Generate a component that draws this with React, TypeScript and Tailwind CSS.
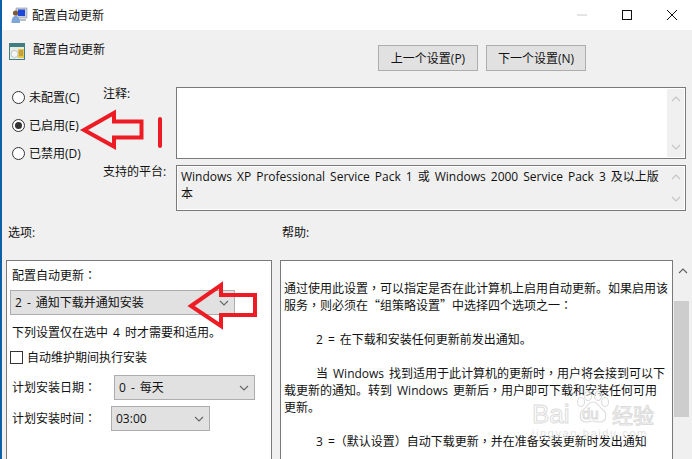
import React from "react";

const Radio = ({ label, checked }: { label: string; checked?: boolean }) => (
  <div className="flex h-[28px] items-center">
    <span className="flex h-[13px] w-[13px] items-center justify-center rounded-full border border-[#333] bg-white">
      {checked && <span className="h-[7px] w-[7px] rounded-full bg-[#333]" />}
    </span>
    <span className="ml-[4px]">{label}</span>
  </div>
);

const Chevron = ({ color = "#666", up }: { color?: string; up?: boolean }) => (
  <svg width="10" height="6" viewBox="0 0 10 6" className="shrink-0">
    <path d={up ? "M1 5L5 1L9 5" : "M1 1L5 5L9 1"} fill="none" stroke={color} strokeWidth="1.1" />
  </svg>
);

const Select = ({ value, className }: { value: string; className: string }) => (
  <div className={`flex h-[25px] items-center justify-between border border-[#adadad] bg-[#e1e1e1] pl-[4px] pr-[5px] ${className}`}>
    <span>{value}</span>
    <Chevron />
  </div>
);

const ScrollCol = () => (
  <div className="flex w-[17px] flex-col items-center justify-between bg-[#f0f0f0] py-[7px]">
    <Chevron color="#c4c4c4" up />
    <Chevron color="#c4c4c4" />
  </div>
);

const Arrow = ({ points }: { points: string }) => (
  <svg className="absolute -ml-[2px] left-0 top-0" width="692" height="459" viewBox="0 0 692 459">
    <polygon points={points} fill="none" stroke="#ed1c24" strokeWidth="4" strokeLinejoin="miter" />
  </svg>
);

// commas and colons sit mid-cell in the original UI font, the TC cut does that
const Mid = ({ children }: { children: string }) => (
  <span className="font-['Noto_Sans_CJK_TC',sans-serif] leading-[0]">{children}</span>
);
const Quote = ({ children }: { children: string }) => (
  <span className="font-['Noto_Sans_CJK_SC',sans-serif] leading-[0]">{children}</span>
);

export default function App() {
  return (
    <div className="relative h-[459px] w-[692px] overflow-hidden border-l-2 border-[#0f5fa8] bg-[#f0f0f0] font-['Open_Sans','Noto_Sans_CJK_SC',sans-serif] text-[12px] leading-[17px] text-[#111] [word-spacing:1.9px]">
      {/* title bar */}
      <div className="flex h-[30px] items-center bg-white">
        <svg width="17" height="17" viewBox="0 0 17 17" className="ml-[9px]">
          <rect x="5" y="1" width="11" height="10" fill="#c9ced6" stroke="#8b93a0" strokeWidth="0.6" />
          <rect x="7" y="2.5" width="7" height="6.5" fill="#1d48d8" />
          <rect x="8" y="12" width="7" height="2" fill="#b9bec6" />
          <circle cx="4.5" cy="6" r="2.6" fill="#7a5a3c" />
          <path d="M0.5 16C0.5 11 2 9 4.5 9C7 9 9 11 9 16Z" fill="#7ea6d8" />
        </svg>
        <span className="ml-[4px]">配置自动更新</span>
        <div className="ml-auto mr-[15px] flex items-center gap-[35px]">
          <svg width="10" height="10" viewBox="0 0 10 10">
            <path d="M0 5H10" stroke="#c8c8c8" strokeWidth="1" />
          </svg>
          <svg width="10" height="10" viewBox="0 0 10 10">
            <rect x="0.5" y="0.5" width="9" height="9" fill="none" stroke="#111" strokeWidth="1" />
          </svg>
          <svg width="10" height="10" viewBox="0 0 10 10">
            <path d="M0 0L10 10M10 0L0 10" stroke="#111" strokeWidth="1" />
          </svg>
        </div>
      </div>

      {/* header row */}
      <div className="mt-[15px] flex h-[26px]">
        <div className="ml-[7px] flex items-start">
          <svg width="16" height="17" viewBox="0 0 16 17" className="-mt-[2px]">
            <rect x="0" y="0" width="16" height="17" fill="#3f7f80" />
            <rect x="1" y="4" width="14" height="12" fill="#e9ece6" />
            <circle cx="5.5" cy="11" r="3.5" fill="#f4f4f4" stroke="#9aa" strokeWidth="0.6" />
            <rect x="9" y="6" width="6" height="9" fill="#e8c44c" />
            <path d="M10 8H14M10 10H14M10 12H14" stroke="#7a6a2a" strokeWidth="0.7" />
          </svg>
          <span className="ml-[8px] -mt-[4px]">配置自动更新</span>
        </div>
        <div className="ml-auto mr-[106px] flex gap-[8px]">
          <button className="h-[26px] w-[100px] border border-[#adadad] bg-[#e1e1e1]">上一个设置(P)</button>
          <button className="h-[26px] w-[100px] border border-[#adadad] bg-[#e1e1e1]">下一个设置(N)</button>
        </div>
      </div>

      {/* state + comment */}
      <div className="mt-[12px] flex">
        <div className="ml-[10px] w-[91px]">
          <Radio label="未配置(C)" />
          <Radio label="已启用(E)" checked />
          <Radio label="已禁用(D)" />
        </div>
        <div className="flex-1 pt-[4px]">
          <div className="mr-[6px] flex">
            <span className="-mt-[2px] w-[73px]">注释:</span>
            <div className="flex h-[72px] flex-1 justify-end border border-[#7a7a7a] bg-white p-[1px]">
              <ScrollCol />
            </div>
          </div>
          <div className="mr-[6px] mt-[6px] flex">
            <span className="-mt-[2px] w-[73px]">支持的平台:</span>
            <div className="flex h-[46px] flex-1 border border-[#7a7a7a] bg-white p-[1px]">
              <div className="flex-1 whitespace-nowrap bg-[#f0f0f0] pl-[3px] pt-[1px]">
                Windows XP Professional Service Pack 1 或 Windows 2000 Service Pack 3 及以上版
                <br />本
              </div>
              <ScrollCol />
            </div>
          </div>
        </div>
      </div>

      {/* section labels */}
      <div className="mt-[13px] flex h-[18px]">
        <span className="ml-[6px] w-[274px]">选项:</span>
        <span>帮助:</span>
      </div>

      {/* panels */}
      <div className="ml-[4px] mt-[18px] flex h-[210px]">
        <div className="w-[266px] border border-[#7a7a7a] bg-white pl-[3px] pt-[6px]">
          <div className="ml-[2px]">配置自动更新<Mid>：</Mid></div>
          <Select value="2 - 通知下载并通知安装" className="mt-[6px] w-[225px]" />
          <div className="ml-[2px] mt-[9px]">下列设置仅在选中 4 时才需要和适用。</div>
          <div className="mt-[8px] flex items-center">
            <span className="h-[13px] w-[13px] border border-[#333] bg-white" />
            <span className="ml-[4px]">自动维护期间执行安装</span>
          </div>
          <div className="mt-[9px] flex h-[25px] items-center">
            <span className="ml-[2px] w-[102px]">计划安装日期<Mid>：</Mid></span>
            <Select value="0 - 每天" className="w-[141px]" />
          </div>
          <div className="mt-[6px] flex h-[25px] items-center">
            <span className="ml-[2px] w-[99px]">计划安装时间<Mid>：</Mid></span>
            <Select value="03:00" className="w-[99px]" />
          </div>
        </div>

        <div className="ml-[8px] w-[393px] whitespace-nowrap border border-[#7a7a7a] bg-white pl-[3px] pt-[19px]">
          <div>通过使用此设置<Mid>，</Mid>可以指定是否在此计算机上启用自动更新。如果启用该</div>
          <div>服务<Mid>，</Mid>则必须在<Quote>“</Quote>组策略设置<Quote>”</Quote>中选择四个选项之一<Mid>：</Mid></div>
          <div className="mt-[17px] pl-[32px]">2 = 在下载和安装任何更新前发出通知。</div>
          <div className="mt-[17px] pl-[32px]">当 Windows 找到适用于此计算机的更新时<Mid>，</Mid>用户将会接到可以下</div>
          <div>载更新的通知。转到 Windows 更新后<Mid>，</Mid>用户即可下载和安装任何可用</div>
          <div>更新。</div>
          <div className="mt-[17px] pl-[32px]">3 =（默认设置）自动下载更新<Mid>，</Mid>并在准备安装更新时发出通知</div>
        </div>

        <div className="flex w-[19px] flex-col items-center pt-[8px]">
          <Chevron color="#606060" up />
          <div className="ml-[-2px] mt-[27px] h-[116px] w-[15px] bg-[#cdcdcd]" />
        </div>
      </div>

      {/* red annotation arrows */}
      <Arrow points="84,130 114,113 114,121.5 141.5,121.5 141.5,137.5 114,137.5 114,146.5" />
      <svg className="absolute -ml-[2px] left-0 top-0" width="692" height="459" viewBox="0 0 692 459">
        <path d="M160 119V146" stroke="#ed1c24" strokeWidth="4" strokeLinecap="round" />
      </svg>
      <Arrow points="191,306 221,285 221,295 255,295 255,315 221,315 221,326" />

      {/* watermark */}
      <svg className="absolute left-[572px] top-[391px]" width="38" height="34" viewBox="0 0 38 34">
        <g fill="#ffffff" fillOpacity="0.5" stroke="#dedede" strokeWidth="1.2">
          <ellipse cx="7" cy="11" rx="3.5" ry="4.5" />
          <ellipse cx="14" cy="5" rx="3.5" ry="4.5" />
          <ellipse cx="24" cy="5" rx="3.5" ry="4.5" />
          <ellipse cx="31" cy="11" rx="3.5" ry="4.5" />
          <path d="M19 11C14 11 13 16 9 19C5 22 5 31 12 31C15 31 17 30 19 30C21 30 23 31 26 31C33 31 33 22 29 19C25 16 24 11 19 11Z" />
        </g>
      </svg>
      <div className="absolute left-[530px] top-[401px] flex h-[26px] items-center font-['Liberation_Sans',sans-serif] text-[26px] leading-[26px] text-white/60 [-webkit-text-stroke:1px_#dcdcdc]">
        <span className="w-[50px]">Bai</span>
        <span className="w-[30px] text-[15px]">du</span>
        <span className="font-['Noto_Sans_CJK_SC',sans-serif] text-[21px]">经验</span>
      </div>
      <div className="absolute left-[530px] top-[428px] font-['Liberation_Sans',sans-serif] text-[11px] leading-[11px] tracking-[1.6px] text-[#e4e4e4]">
        jingyan.baidu.com
      </div>
    </div>
  );
}
